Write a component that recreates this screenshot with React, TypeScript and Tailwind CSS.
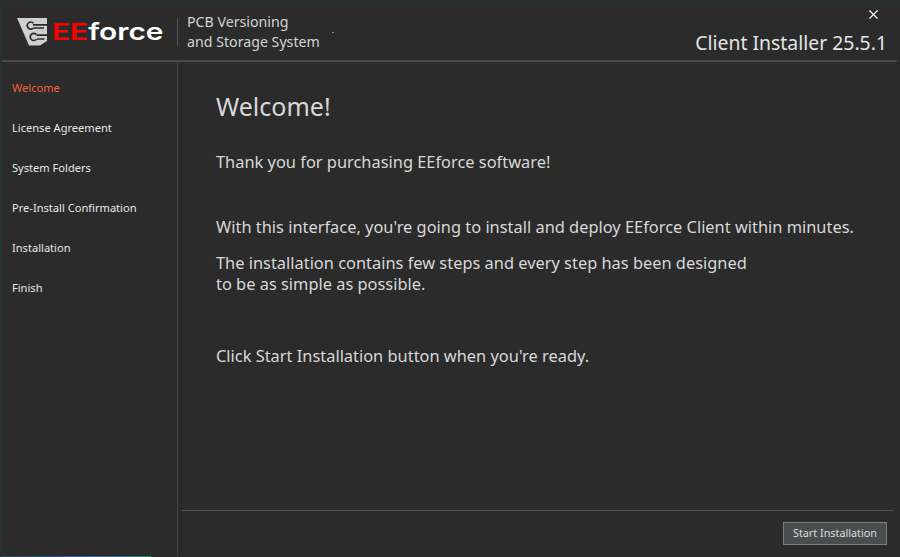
import { X } from "lucide-react";

const steps = ["Welcome", "License Agreement", "System Folders", "Pre-Install Confirmation", "Installation", "Finish"];

function LogoMark() {
  return (
    <svg width="30" height="28" viewBox="0 0 30 28" className="shrink-0">
      <path d="M0 0H30V23L23 27.5H12Z" fill="#cfcfcf" />
      <g fill="none" stroke="#2b2b2b" strokeWidth="1.7">
        <path d="M16.5 5.2A3.6 3.6 0 1 0 16.5 10" />
        <path d="M19.5 16.5A3.6 3.6 0 1 0 19.5 21.3" />
        <path d="M16 6.8H30M16.5 10H27" />
        <path d="M19.5 17.2H30M20 21H27.5" />
      </g>
    </svg>
  );
}

export default function App() {
  return (
    <div className="flex h-[557px] w-[900px] flex-col overflow-hidden border-t border-l border-[#1f3533] bg-[#2b2b2b] text-[#dcdcdc] font-['Noto_Sans','Open_Sans',sans-serif]">
      <div className="flex min-h-0 w-[896px] flex-1 flex-col">
        <header className="flex h-[61px] shrink-0 border-b-2 border-[#4a4a4a] pl-[16px]">
          <div className="flex items-center pt-[3px]">
            <LogoMark />
            <div className="ml-[5px] w-[113px] origin-left scale-x-[1.27] whitespace-nowrap text-[23.5px] font-semibold leading-none font-['Inter',sans-serif]">
              <span className="text-[#ff0000]">EE</span>
              <span className="text-white">force</span>
            </div>
            <div className="ml-[12px] h-[28px] w-px bg-[#555555]" />
            <div className="ml-[9px] text-[14.2px] leading-[20px] text-[#d4d4d4]">
              <div>PCB Versioning</div>
              <div>and Storage System</div>
            </div>
            <div className="ml-[12px] mt-[1px] h-px w-[2px] bg-[#8a8a8a]" />
          </div>
          <div className="ml-auto flex flex-col items-end pr-[10px]">
            <X size={15} strokeWidth={1.8} className="mr-[6px] mt-[6px] text-white" />
            <div className="mt-[8px] text-[19.4px] leading-[26px] text-[#e4e4e4]">Client Installer 25.5.1</div>
          </div>
        </header>
        <div className="flex min-h-0 flex-1">
          <nav className="flex w-[177px] shrink-0 flex-col border-r border-[#444444] pl-[11px] pt-[6px]">
            {steps.map((step, i) => (
              <div
                key={step}
                className={`flex h-[40px] items-center text-[11.1px] ${i === 0 ? "text-[#f0613a]" : "text-[#e8e8e8]"}`}
              >
                {step}
              </div>
            ))}
          </nav>
          <main className="flex min-w-0 flex-1 flex-col">
            <div className="flex-1 pl-[38px] pt-[26px] text-[16.4px] leading-[22px] text-[#d8d8d8]">
              <h1 className="text-[25px] leading-[36px]">Welcome!</h1>
              <p className="mt-[27px]">Thank you for purchasing EEforce software!</p>
              <p className="mt-[43px]">With this interface, you're going to install and deploy EEforce Client within minutes.</p>
              <p className="mt-[14px] leading-[21px]">
                The installation contains few steps and every step has been designed
                <br />
                to be as simple as possible.
              </p>
              <p className="mt-[51px]">Click Start Installation button when you're ready.</p>
            </div>
            <footer className="ml-[4px] mr-[4px] flex h-[46px] shrink-0 justify-end border-t border-[#555555] pt-[10px]">
              <button className="mr-[6px] mt-px h-[23px] w-[104px] border border-[#7a7f80] bg-[#484d4e] text-[10.8px] leading-none text-[#dddddd]">
                Start Installation
              </button>
            </footer>
          </main>
        </div>
      </div>
      <div className="h-px w-[150px] shrink-0 bg-linear-to-r from-[#24504c] via-[#3f4fa0] to-[#1f7a60]" />
    </div>
  );
}
